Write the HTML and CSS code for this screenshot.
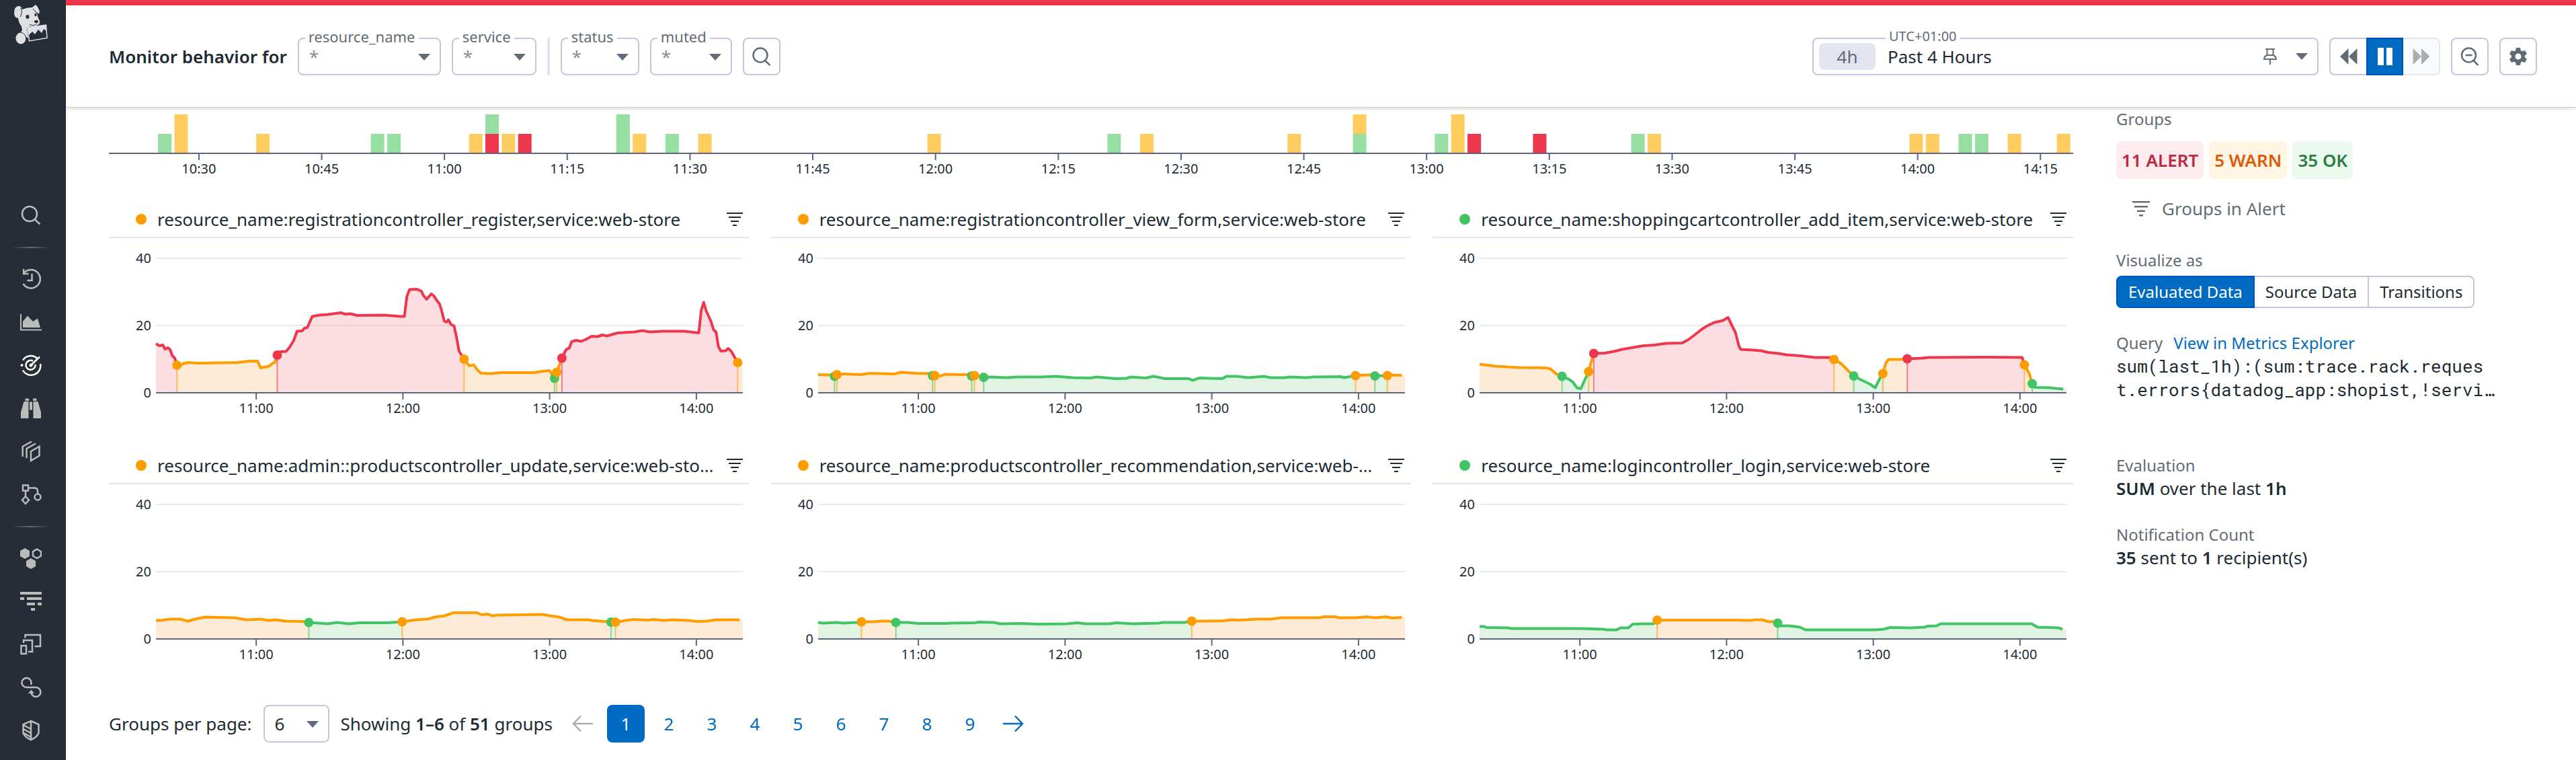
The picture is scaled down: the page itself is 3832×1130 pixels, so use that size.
FILE: index.html
```html
<!DOCTYPE html>
<html lang="en">
<head>
    <meta charset="UTF-8">
    <meta name="viewport" content="width=device-width, initial-scale=1.0">
    <title>Monitor behavior</title>
    <link rel="stylesheet" href="styles.css">
</head>
<body>

<nav class="sidebar">
    <a class="logo" href="#" aria-label="Home">
        <svg width="52" height="60" viewBox="0 0 52 60">
            <path fill="#dfe0e3" d="M2 6 Q6 0 11 3 L13 7 Q20 4 28 4 L33 0 Q38 5 39 11 L37 14 L35 10 Q35 17 39 24 Q40 29 36 30 Q31 35 25 32 L20 34 L22 50 L19 48 Q15 42 11 41 L13 38 L12 32 Q8 28 7 20 Q1 19 1 12 Z"/>
            <ellipse cx="11" cy="50" rx="7.5" ry="8.5" fill="#dfe0e3"/>
            <path fill="none" stroke="#272d37" stroke-width="1" d="M11 5 Q14 12 10 18 M29 6 L35 13 M24 29 Q30 33 35 28 M11 41 Q19 43 19 52"/>
            <ellipse cx="21" cy="18" rx="2.6" ry="3" fill="#272d37"/>
            <ellipse cx="33" cy="15" rx="1.6" ry="2.2" fill="#272d37"/>
            <ellipse cx="34" cy="25" rx="3" ry="2" fill="#272d37"/>
            <path fill="#272d37" stroke="#dfe0e3" stroke-width="1.5" d="M21 34 L48.500 30 L50 49.500 L23.500 54 Z"/>
            <path fill="#dfe0e3" d="M21 34 L48 30 L48.500 39 L45 36 L42 42 L37 37 L32 44 L28 40 L23 45 Z"/>
        </svg>
    </a>
    <a class="nav-item" href="#" aria-label="Search">
        <svg class="icon" viewBox="0 0 32 32"><circle cx="14" cy="14" r="11"/><path d="M21.500 22 L29.500 29.500"/></svg>
    </a>
    <hr class="nav-divider">
    <a class="nav-item" href="#" aria-label="Recent">
        <svg class="icon" viewBox="0 0 32 32"><path d="M4.500 8.500 A13.700 13.700 0 1 1 4.500 23"/><path d="M5.200 1 V8 H12.500 M17.500 8 V18 H10.500"/></svg>
    </a>
    <a class="nav-item" href="#" aria-label="Dashboards">
        <svg class="icon" viewBox="0 0 32 32"><path d="M1 4 V27.500 H32" stroke-width="2"/><path class="solid" d="M4 24 V15 L11 6.500 L19 15 L26 10.500 L30 24 Z"/></svg>
    </a>
    <a class="nav-item active" href="#" aria-label="Monitors">
        <svg class="icon" viewBox="0 0 32 32"><path d="M4 8.500 A14 14 0 0 1 25 5.500 M30 14 A14 14 0 0 1 4 23.500 M22.500 15 A7 7 0 1 1 19 9.700 M16 16 L29 3.500"/><circle class="solid" cx="2.500" cy="16" r="2"/><circle class="solid" cx="16" cy="16" r="2.500"/></svg>
    </a>
    <a class="nav-item" href="#" aria-label="Watchdog">
        <svg class="icon" viewBox="0 0 32 32"><path class="solid" d="M7.500 1.500 H13 V5 H7.500 Z M19 1.500 H24.500 V5 H19 Z M5.500 6 H12.500 V31 H1 V22 Z M19.500 6 H26.500 L31 22 V31 H19.500 Z M14 6.500 H18 V18.500 H14 Z"/></svg>
    </a>
    <a class="nav-item" href="#" aria-label="Infrastructure">
        <svg class="icon" viewBox="0 0 32 32"><path d="M16 16 L28.500 9 V22.500 L16 30 Z M9.500 26 V12 L23 4.500 M3.700 24 V9 L17 1.500"/></svg>
    </a>
    <a class="nav-item" href="#" aria-label="CI">
        <svg class="icon" viewBox="0 0 32 32"><path d="M4 2.500 H12 V10.500 H4 Z M8 10.500 V19 M8 19 L13 24.500 L8 30 L3 24.500 Z M12 6.500 H21 Q26 6.500 26 11 V15.500"/><circle cx="26" cy="20" r="4.500"/></svg>
    </a>
    <hr class="nav-divider">
    <a class="nav-item" href="#" aria-label="Integrations">
        <svg class="icon" viewBox="0 0 32 32"><path class="solid" d="M7 1 L14 5 V13 L7 17 L0 13 V5 Z M16 16 L23 20 V28 L16 32 L9 28 V20 Z"/><path d="M25 2.500 L31 6 V12.500 L25 16 L19 12.500 V6 Z"/></svg>
    </a>
    <a class="nav-item" href="#" aria-label="APM">
        <svg class="icon" viewBox="0 0 32 32"><path class="solid" d="M0 2 H32 V6 H0 Z M0 10 H6 V14 H0 Z M10 10 H32 V14 H10 Z M10 18 H22 V22 H10 Z M26 18 H32 V22 H26 Z M16 26 H22 V30 H16 Z"/></svg>
    </a>
    <a class="nav-item" href="#" aria-label="UX monitoring">
        <svg class="icon" viewBox="0 0 32 32"><path d="M1.500 18 H9 V30 H1.500 Z M5 14 V10 H18 V27 H12 M7.500 6.500 V2 H30 V19 H21.500"/></svg>
    </a>
    <a class="nav-item" href="#" aria-label="Synthetics">
        <svg class="icon" viewBox="0 0 32 32"><path d="M16.500 12 V9 A7 7 0 1 0 9.500 16 H23 A7 7 0 1 1 16.500 24"/><path class="solid" d="M12 25 L16.500 19.500 L21 25 Z"/></svg>
    </a>
    <a class="nav-item" href="#" aria-label="Security">
        <svg class="icon" viewBox="0 0 32 32"><path d="M16 2 L27.500 7 V20 Q25 26 16 30 Q7 26 4.500 20 V7 Z M16 2 V30 M5 8 L16 14 M5 14 L16 20 M6 20 L16 26"/></svg>
    </a>
</nav>

<div class="page">
    <header class="topbar">
        <h1 class="topbar-title">Monitor behavior for</h1>
        <div class="filters">
            <div class="filter filter-resource">
                <label for="resource">resource_name</label>
                <select id="resource"><option>*</option></select>
            </div>
            <div class="filter filter-service">
                <label for="service">service</label>
                <select id="service"><option>*</option></select>
            </div>
            <span class="separator"></span>
            <div class="filter filter-status">
                <label for="status">status</label>
                <select id="status"><option>*</option></select>
            </div>
            <div class="filter filter-muted">
                <label for="muted">muted</label>
                <select id="muted"><option>*</option></select>
            </div>
            <button class="icon-button" type="button" aria-label="Search">
                <svg width="28" height="28" viewBox="0 0 28 28" fill="none" stroke="currentColor" stroke-width="2.500"><circle cx="12" cy="12" r="10.500"/><path d="M19 20 L26.500 27"/></svg>
            </button>
        </div>

        <div class="time-controls">
            <button class="time-range" type="button">
                <span class="timezone">UTC+01:00</span>
                <span class="time-pill">4h</span>
                <span class="time-text">Past 4 Hours</span>
                <svg width="20" height="26" viewBox="0 0 20 26" fill="none" stroke="currentColor" stroke-width="2"><path d="M3 2 H17 M5.500 2 V11 M14.500 2 V11 M5.500 11 Q1 13 1 17 H19 Q19 13 14.500 11 Z M10 17 V25"/></svg>
                <span class="caret"></span>
            </button>
            <div class="playback">
                <button class="icon-button" type="button" aria-label="Back">
                    <svg width="26" height="24" viewBox="0 0 26 24" fill="currentColor"><path d="M12.500 0 V24 L0 12 Z M25.500 0 V24 L13 12 Z"/></svg>
                </button>
                <button class="icon-button selected" type="button" aria-label="Pause">
                    <svg width="24" height="26" viewBox="0 0 24 26" fill="currentColor"><path d="M1 0 H10 V26 H1 Z M14 0 H23 V26 H14 Z"/></svg>
                </button>
                <button class="icon-button" type="button" aria-label="Forward" disabled>
                    <svg width="26" height="24" viewBox="0 0 26 24" fill="currentColor"><path d="M0.500 0 V24 L13 12 Z M13 0 V24 L25.500 12 Z"/></svg>
                </button>
            </div>
            <button class="icon-button" type="button" aria-label="Zoom out">
                <svg width="28" height="28" viewBox="0 0 28 28" fill="none" stroke="currentColor" stroke-width="2.500"><circle cx="12.500" cy="12" r="10.500"/><path d="M19.500 20 L26.500 27 M7.500 12 H17.500"/></svg>
            </button>
            <button class="icon-button" type="button" aria-label="Settings">
                <svg width="28" height="28" viewBox="0 0 28 28" fill="currentColor"><path fill-rule="evenodd" d="M11 1 H17 L17.800 5 L20 6.300 L24 5 L27 10 L24 12.700 V15.300 L27 18 L24 23 L20 21.700 L17.800 23 L17 27 H11 L10.200 23 L8 21.700 L4 23 L1 18 L4 15.300 V12.700 L1 10 L4 5 L8 6.300 L10.200 5 Z M14 9.500 A4.500 4.500 0 1 0 14 18.500 A4.500 4.500 0 1 0 14 9.500 Z"/></svg>
            </button>
        </div>
    </header>

    <div class="content">
        <main class="groups">
            <div class="timeline" id="timeline"></div>
            <div class="chart-grid" id="charts"></div>

            <div class="pagination">
                <label for="perPage">Groups per page:</label>
                <div class="filter filter-page">
                    <select id="perPage"><option>6</option></select>
                </div>
                <span>Showing <b>1–6</b> of <b>51</b> groups</span>
                <div class="pages">
                    <button type="button" aria-label="Previous" disabled>
                        <svg width="32" height="26" viewBox="0 0 32 26" fill="none" stroke="currentColor" stroke-width="2.500"><path d="M31 13 H2 M13 1.500 L2 13 L13 24.500"/></svg>
                    </button>
                    <button type="button" class="current">1</button>
                    <button type="button">2</button>
                    <button type="button">3</button>
                    <button type="button">4</button>
                    <button type="button">5</button>
                    <button type="button">6</button>
                    <button type="button">7</button>
                    <button type="button">8</button>
                    <button type="button">9</button>
                    <button type="button" aria-label="Next">
                        <svg width="32" height="26" viewBox="0 0 32 26" fill="none" stroke="currentColor" stroke-width="2.500"><path d="M1 13 H30 M19 1.500 L30 13 L19 24.500"/></svg>
                    </button>
                </div>
            </div>
        </main>

        <aside class="details">
            <h2>Groups</h2>
            <div class="badges">
                <span class="badge alert">11 ALERT</span>
                <span class="badge warn">5 WARN</span>
                <span class="badge ok">35 OK</span>
            </div>
            <button class="alert-filter" type="button">
                <svg width="26" height="23" viewBox="0 0 26 23" fill="currentColor"><path d="M0 0 H26 V2.500 H0 Z M3 7 H23 V9.500 H3 Z M7 13.500 H19 V16 H7 Z M10 20 H16 V22.500 H10 Z"/></svg>
                Groups in Alert
            </button>

            <h2>Visualize as</h2>
            <div class="tabs">
                <button type="button" class="selected">Evaluated Data</button>
                <button type="button">Source Data</button>
                <button type="button">Transitions</button>
            </div>

            <div class="query-head">
                <h2>Query</h2>
                <a href="#">View in Metrics Explorer</a>
            </div>
            <code class="query">sum(last_1h):(sum:trace.rack.reques<br>t.errors{datadog_app:shopist,!servi…</code>

            <h2>Evaluation</h2>
            <p class="evaluation"><b>SUM</b> over the last <b>1h</b></p>

            <h2>Notification Count</h2>
            <p><b>35</b> sent to <b>1</b> recipient(s)</p>
        </aside>
    </div>
</div>

<script src="script.js"></script>
</body>
</html>
```
FILE: styles.css
```css
* {
    box-sizing: border-box;
}
body {
    margin: 0;
    display: flex;
    min-height: 100vh;
    font-family: "Noto Sans", "Open Sans", sans-serif;
    font-size: 26px;
    line-height: 34px;
    color: #1c2b34;
    background: #fff;
}
button, select {
    font: inherit;
    color: inherit;
}
button {
    padding: 0;
    background: #fff;
    cursor: pointer;
}
h1, h2, p {
    margin: 0;
}
a {
    color: #006bc2;
    text-decoration: none;
}
b {
    font-weight: 600;
}

/* Sidebar */
.sidebar {
    flex: none;
    width: 98px;
    padding-right: 6px;
    display: flex;
    flex-direction: column;
    align-items: center;
    background: #272d37;
}
.logo {
    height: 288px;
    padding-top: 7px;
}
.nav-item {
    height: 64px;
    display: flex;
    align-items: center;
    color: #babcba;
}
.nav-item.active {
    color: #fff;
}
.nav-divider {
    width: 56px;
    height: 2px;
    margin: 15px 0 14px;
    border: 0;
    background: linear-gradient(to right, transparent, #6a6a6c, transparent);
}
.icon {
    width: 32px;
    height: 32px;
    fill: none;
    stroke: currentColor;
    stroke-width: 2.5px;
}
.icon .solid {
    fill: currentColor;
    stroke: none;
}

/* Top bar */
.page {
    flex: 1;
    min-width: 0;
    border-top: 8px solid #ee364c;
}
.topbar {
    height: 152px;
    padding: 0 58px 0 64px;
    display: flex;
    align-items: center;
    border-bottom: 1px solid #ccc;
    box-shadow: 0 2px 6px rgba(0, 0, 0, 0.14);
}
.topbar-title {
    font-size: 26px;
    font-weight: 600;
    margin-right: 16px;
}
.filters, .time-controls {
    display: flex;
    gap: 16px;
}
.time-controls {
    margin-left: auto;
}
.filter {
    position: relative;
    height: 56px;
}
.filter label {
    position: absolute;
    top: -16px;
    left: 11px;
    padding: 0 5px;
    font-size: 22px;
    line-height: 28px;
    color: #626c76;
    background: #fff;
}
.filter select {
    width: 100%;
    height: 100%;
    padding: 0 15px;
    border: 2px solid #c2c5de;
    border-radius: 8px;
    appearance: none;
    background: #fff;
    color: #868d94;
}
.filter::after, .caret {
    content: "";
    border: 9px solid transparent;
    border-top: 10px solid #626c76;
    border-bottom: 0;
}
.filter::after {
    position: absolute;
    right: 16px;
    top: 24px;
    pointer-events: none;
}
.filter-resource {
    width: 213px;
}
.filter-service {
    width: 126px;
}
.filter-status {
    width: 117px;
}
.filter-muted {
    width: 122px;
}
.separator {
    width: 4px;
    background: #e2e4ef;
}
.icon-button {
    width: 56px;
    height: 56px;
    display: flex;
    align-items: center;
    justify-content: center;
    border: 2px solid #c2c5de;
    border-radius: 8px;
    color: #626c76;
}
.icon-button:disabled {
    color: #a8adb3;
    background: #f9fafc;
    border-color: #e2e4ef;
}
.icon-button.selected, .tabs .selected {
    color: #fff;
    background: #006bc2;
    border-color: #0052ba;
}
.time-range {
    position: relative;
    width: 753px;
    height: 56px;
    padding: 0 14px 0 8px;
    display: flex;
    align-items: center;
    border: 2px solid #c2c5de;
    border-radius: 8px;
    color: #626c76;
}
.timezone {
    position: absolute;
    top: -16px;
    left: 107px;
    padding: 0 5px;
    font-size: 20px;
    line-height: 24px;
    background: #fff;
}
.time-pill {
    width: 84px;
    height: 40px;
    line-height: 40px;
    border-radius: 8px;
    background: #e2e4ef;
}
.time-text {
    flex: 1;
    padding-left: 18px;
    text-align: left;
    color: #1c2b34;
}
.time-range .caret {
    margin-left: 28px;
}
.playback {
    display: flex;
}
.playback .icon-button {
    width: 55px;
}
.playback .icon-button:first-child {
    border-right: 0;
    border-radius: 8px 0 0 8px;
}
.playback .selected {
    border-radius: 0;
}
.playback .icon-button:last-child {
    border-left: 0;
    border-radius: 0 8px 8px 0;
}

/* Content */
.content {
    display: flex;
    gap: 64px;
    padding: 0 58px 0 64px;
}
.groups {
    flex: 1;
    min-width: 0;
}
.timeline {
    height: 140px;
}
.timeline svg, .plot svg {
    display: block;
    overflow: visible;
}
.chart-grid {
    display: grid;
    grid-template-columns: repeat(3, minmax(0, 1fr));
    gap: 0 32px;
}
.chart {
    height: 366px;
}
.chart-head {
    height: 54px;
    padding: 0 10px 0 40px;
    display: flex;
    align-items: center;
    border-bottom: 2px solid #e2e4ef;
}
.chart-title {
    flex: 1;
    margin: 0 17px 0 16px;
    overflow: hidden;
    white-space: nowrap;
    text-overflow: ellipsis;
}
.dot {
    width: 16px;
    height: 16px;
    border-radius: 50%;
}
.dot.warn {
    background: #ff9d00;
}
.dot.ok {
    background: #41c464;
}
.plot {
    padding: 0 10px 0 70px;
}

/* Chart drawing */
.axis {
    stroke: #5d6380;
    stroke-width: 2;
}
.grid-line {
    stroke: #ebebeb;
    stroke-width: 2;
}
.tick-label {
    font-size: 20px;
    fill: #1c2b34;
}
.line {
    fill: none;
    stroke-width: 4;
    stroke-linejoin: round;
}
.mark {
    stroke-width: 2;
    stroke-opacity: 0.6;
}
.line.alert, .mark.alert {
    stroke: #ee364c;
}
.line.warn, .mark.warn {
    stroke: #ff9d00;
}
.line.ok, .mark.ok {
    stroke: #41c464;
}
.area.alert {
    fill: rgba(238, 54, 76, 0.17);
}
.area.warn {
    fill: #feebd7;
}
.area.ok {
    fill: #e1f3e3;
}
.point.alert, .bar.alert {
    fill: #ee364c;
}
.point.warn {
    fill: #ff9d00;
}
.point.ok {
    fill: #41c464;
}
.bar.warn {
    fill: #ffcd5f;
}
.bar.ok {
    fill: #96dea2;
}

/* Pagination */
.pagination {
    display: flex;
    align-items: center;
    gap: 17px;
    margin-top: 16px;
}
.filter-page {
    width: 98px;
}
.filter-page select {
    color: #1c2b34;
}
.pages {
    display: flex;
    gap: 8px;
}
.pages button {
    width: 56px;
    height: 56px;
    display: flex;
    align-items: center;
    justify-content: center;
    border: 0;
    border-radius: 8px;
    color: #006bc2;
}
.pages button:disabled {
    color: #a8adb3;
}
.pages .current {
    color: #fff;
    background: #006bc2;
}

/* Details panel */
.details {
    width: 626px;
}
.details h2 {
    font-size: 24px;
    font-weight: 400;
    line-height: 34px;
    color: #626c76;
}
.badges {
    display: flex;
    gap: 8px;
    margin: 16px 0;
}
.badge {
    padding: 0 8px;
    font-weight: 600;
    line-height: 56px;
    border-radius: 8px;
}
.badge.alert {
    color: #bc2a3f;
    background: #fdebed;
}
.badge.warn {
    color: #db5b0b;
    background: #fff5e2;
}
.badge.ok {
    color: #2a7e41;
    background: #ecf9ef;
}
.alert-filter {
    height: 56px;
    padding: 0 24px;
    margin-bottom: 32px;
    display: flex;
    align-items: center;
    gap: 18px;
    border: 0;
    color: #626c76;
}
.tabs {
    display: flex;
    margin: 6px 0 35px;
}
.tabs button {
    height: 48px;
    padding: 0 16px;
    font-size: 24px;
    border: 2px solid #c2c5de;
    border-left: 0;
}
.tabs button:first-child {
    border-left: 2px solid #0052ba;
    border-radius: 8px 0 0 8px;
}
.tabs button:last-child {
    border-radius: 0 8px 8px 0;
}
.query-head {
    display: flex;
    gap: 16px;
    font-size: 24px;
}
.query {
    display: block;
    margin-bottom: 78px;
    font-family: "Roboto Mono", "Liberation Mono", monospace;
    font-size: 26px;
    line-height: 35px;
}
.evaluation {
    margin-bottom: 35px;
}
```
FILE: script.js
```javascript
const MINUTES = 240;
const START = 10 * 60 + 19;

// [slot, state of each event from the bottom up], two minutes per slot
const events = [
    [3, "ok"], [4, "warn", "warn"], [9, "warn"], [16, "ok"], [17, "ok"],
    [22, "warn"], [23, "alert", "ok"], [24, "warn"], [25, "alert"],
    [31, "ok", "ok"], [32, "warn"], [34, "ok"], [36, "warn"],
    [50, "warn"], [61, "ok"], [63, "warn"], [72, "warn"], [76, "ok", "warn"],
    [81, "ok"], [82, "warn", "warn"], [83, "alert"], [87, "alert"],
    [93, "ok"], [94, "warn"], [110, "warn"], [111, "warn"],
    [113, "ok"], [114, "ok"], [116, "warn"], [119, "warn"]
];

// Each run is a state and its points: minute,value
const charts = [
    {
        name: "resource_name:registrationcontroller_register,service:web-store",
        state: "warn",
        runs: [
            ["alert", "0,14.6 1.4,14 2.8,14.2 3.7,13 4.9,13.4 5.8,12.8 6.7,11 7.7,10.3"],
            ["warn", "8.6,8.2 10,8.1 11.2,8.7 13.3,9 17.7,8.8 24.7,8.9 33.5,9 37.9,9.4 41.6,9.4 42.8,7.4 46.3,7.9 47.5,8.7 48.6,9"],
            ["alert", "49.6,11.2 50.7,12.2 53.2,12.3 54.6,13.5 56.3,15.5 57.7,18.3 59.8,18.4 60.7,19.2 61.9,19.4 63,21.2 63.9,22.7 66.8,23.1 70.4,23.3 75.6,23.8 77.4,23.4 79.6,23.5 82.3,23 93.2,23.1 100.2,22.7 101.6,22.7 102.6,28.6 103.7,30.7 106.7,30.8 108.6,30.2 109.3,29 110.7,27.8 112.6,29.4 113.7,28.8 114.7,27.6 116,26.4 116.8,24.5 117.9,21.3 118.8,21 119.6,21.7 120.7,20.3 121.9,19.9 123,16.2 124,12.3"],
            ["warn", "126,10 127,9 128.2,8 130,8.3 131.2,7 133,5.8 137,5.7 141.4,6 154.6,6 158,6.4 161,6.6"],
            ["ok", "163,4.3"],
            ["warn", "163.9,6.1"],
            ["alert", "166,10.3 167.7,12.8 169,13.3 170,15.2 171.8,15.6 173.9,15.3 175.6,15.8 178.2,16.8 180.5,16.7 182.6,17.2 184.4,16.9 188.8,17.8 195.8,18.1 198.8,18.5 202,18.1 207.2,18.3 216,18.3 222,17.8 223,24.5 224,26.9 225,24.4 227,21.2 228,18.8 229.1,18 230,13.8 231,12.4 233,12.5 234,13.2 235.3,12.3"],
            ["warn", "237.9,9"]
        ]
    },
    {
        name: "resource_name:registrationcontroller_view_form,service:web-store",
        state: "warn",
        runs: [
            ["warn", "0,5.4 5,5.3"],
            ["ok", "6.7,4.9"],
            ["warn", "7.7,5.4 11,5.6 17.5,5.4 21,5.8 31,5.6 34,6.1 40,5.8 46,5.7"],
            ["ok", "46.8,5.1"],
            ["warn", "47.7,5.1 50,5 52,5.5 56.8,5.4 62,5.4"],
            ["ok", "62.8,5"],
            ["warn", "63.9,5.1 67,5"],
            ["ok", "67.7,4.6 70.9,4.7 77,4.5 81.4,4.7 91,4.7 97.2,4.9 104.2,4.5 111.2,4.4 113.9,4.7 121.8,4.2 126.1,4.3 127.9,4.7 134,4.4 137.2,4.9 141.9,4.2 151.6,4.2 153.2,3.7 156,4.4 165.3,4.2 167,4.9 171.2,4.9 176.1,4.5 182.3,4.9 184.9,4.5 191,4.5 192.8,4.7 199.8,4.5 202.5,4.7 213.9,4.8 215.1,4.5"],
            ["warn", "219.8,5.1 223.5,5.3 226.5,5.3"],
            ["ok", "227.7,5 231.4,5.1"],
            ["warn", "232.8,5.1 234,5.3 238.7,5.2"]
        ]
    },
    {
        name: "resource_name:shoppingcartcontroller_add_item,service:web-store",
        state: "ok",
        runs: [
            ["warn", "0,8.5 6.5,7.9 16.1,7.5 27.2,7.4 29,7.1 31.4,5.6"],
            ["ok", "33.7,4.9 36.3,4.1 38,3.3 39.8,1.5 41.4,1.2 43,3.8"],
            ["warn", "44.6,6.3 45.6,9.1"],
            ["alert", "46.7,11.7 51.2,11.8 55.6,12.4 58.2,12.9 67,14 71.4,14.2 76.3,14.7 82.8,14.8 85.4,15.8 88.1,17.3 90.7,18.8 92.8,19.8 96,20.9 99.5,21.5 101.6,22.4 104.7,17.8 106.1,13.8 106.8,12.9 111.8,12.7 115.3,12.5 117.9,12 122.3,11.7 125.4,11.3 131.1,11 137.2,10.5 143.3,10.5"],
            ["warn", "144.9,9.9 147.7,8.8 150.4,6.8"],
            ["ok", "153,5 155.6,4 159.6,2.6 161.8,1.5 163.5,4"],
            ["warn", "164.9,5.7 166.1,8.8 167.2,9.9 171.4,9.9"],
            ["alert", "174.9,10.1 181,10.3 183.7,10.5 208.2,10.6 221.9,10.5"],
            ["warn", "222.8,8.3 224.9,5.5"],
            ["ok", "226,2.7 227,1.6 232.8,1.5 238.7,1.1"]
        ]
    },
    {
        name: "resource_name:admin::productscontroller_update,service:web-store",
        state: "warn",
        runs: [
            ["warn", "0,5.5 2.8,5.6 5.8,5.9 9.9,5.9 13,5.3 15.5,5.8 20,6.5 32,6.3 37,5.7 43,5.9 46,5.5 49,5.7 53,5.3 60,5.2"],
            ["ok", "62.5,4.9 70.2,4.5 74,4.9 79,4.5 83,4.8 94.3,4.8"],
            ["warn", "100.7,5.1 106.3,5.7 111,5.9 114.7,6.6 117.7,6.8 121.8,7.8 131.2,7.8 133.2,7.2 135.5,7.4 137.6,6.9 140,7.1 158,7.3 161,6.9 165,6.5 168,5.7 177,5.7 178.2,5.5 183.3,5.2"],
            ["ok", "186.1,5"],
            ["warn", "187.9,5 192.2,5.5 195.3,5.8 201,5.6 203.7,5.8 207.5,5.5 211.3,5.7 217.7,5.5 221.5,5.2 225.3,5.3 229,5.7 238.7,5.7"]
        ]
    },
    {
        name: "resource_name:productscontroller_recommendation,service:web-store",
        state: "warn",
        runs: [
            ["ok", "0,4.9 2.1,4.7 7.7,4.9 10.4,4.7 15.6,4.9"],
            ["warn", "17.7,5.1 22.6,5.1 26.1,5.3 29.1,5.3"],
            ["ok", "31.8,4.9 36.7,4.9 41,4.6 52.5,4.6 54.2,4.7 63.9,4.8 65.6,5 71.8,4.9 74.4,4.5 83.2,4.6 90.2,4.4 101.6,4.5 106,4.8 109.5,4.5 119.1,4.5 121.8,4.8 128.8,4.5 139.3,4.7 141,4.9 149.8,4.9"],
            ["warn", "152.8,5.3 157.7,5.3 165.6,5.4 169.1,5.7 172.6,5.6 179.6,5.9 184.9,5.9 189.3,6.3 205.1,6.3 206.8,6.6 211.6,6.6 213,6.3 220,6.3 224.4,6.6 227.9,6.3 232.3,6.6 234.9,6.2 238.7,6.4"]
        ]
    },
    {
        name: "resource_name:logincontroller_login,service:web-store",
        state: "ok",
        runs: [
            ["ok", "0,3.7 2.1,3.7 2.6,3.4 11.8,3.3 13,3.1 40.7,3.1 50.4,2.9 52.1,2.7 56,2.7 57.7,3.3 60.9,3.3 62.6,4.4 66.7,4.5 71,4.5"],
            ["warn", "72.6,5.6 104.7,5.6 110.9,5.5 112.6,5.7 115.6,5.7 117.9,5.2 120.9,5.1"],
            ["ok", "121.9,4.7 122.8,3.9 126.7,3.9 131,3.5 133.3,2.7 161.8,2.7 165.3,2.9 167.9,3.4 176.7,3.3 181.9,3.5 183.3,3.8 186.8,3.9 188.6,4.5 225.8,4.5 228.1,3.5 236.7,3.3 238.4,2.9"]
        ]
    }
];

function clock(minute) {
    return Math.floor(minute / 60) + ":" + String(minute % 60).padStart(2, "0");
}

// Axis line with a tick and a label every `step` minutes
function drawAxis(width, y, step) {
    let out = `<line class="axis" x1="0" x2="${width}" y1="${y}" y2="${y}"/>`;
    for (let t = Math.ceil(START / step) * step; t < START + MINUTES; t += step) {
        const x = (t - START) / MINUTES * width;
        out += `<line class="axis" x1="${x}" x2="${x}" y1="${y}" y2="${y + 10}"/>`;
        out += `<text class="tick-label" x="${x}" y="${y + 30}" text-anchor="middle">${clock(t)}</text>`;
    }
    return out;
}

function drawTimeline() {
    const box = document.getElementById("timeline");
    const width = box.clientWidth;
    const slot = width / 120;
    let out = "";
    events.forEach(([index, ...states]) => {
        states.forEach((state, level) => {
            out += `<rect class="bar ${state}" x="${index * slot}" y="${39 - level * 29}" width="20" height="29"/>`;
        });
    });
    box.innerHTML = `<svg width="${width}" height="110">${out}${drawAxis(width, 68, 15)}</svg>`;
}

function drawPlot(box, chart) {
    const width = box.clientWidth - 80;
    const base = 230;
    const px = ([m, v]) => [m / MINUTES * width, base - v * 5];
    let out = "", marks = "";

    [20, 40].forEach(v => {
        out += `<line class="grid-line" x1="0" x2="${width}" y1="${base - v * 5}" y2="${base - v * 5}"/>`;
    });
    [0, 20, 40].forEach(v => {
        out += `<text class="tick-label" x="-7" y="${base - v * 5 + 7}" text-anchor="end">${v}</text>`;
    });

    const runs = chart.runs.map(([state, text]) => [state, text.split(" ").map(p => px(p.split(",").map(Number)))]);
    runs.forEach(([state, points], i) => {
        const next = runs[i + 1];
        const line = next ? points.concat([next[1][0]]) : points;
        const last = line[line.length - 1];
        const end = next ? last[0] : width;
        out += `<path class="area ${state}" d="M${points[0][0]} ${base} L${line.join(" L")} L${end} ${last[1]} V${base} Z"/>`;
        out += `<polyline class="line ${state}" points="${line.join(" ")}"/>`;
        if (i > 0) {
            const [x, y] = points[0];
            marks += `<line class="mark ${state}" x1="${x}" x2="${x}" y1="${y}" y2="${base}"/>`;
            marks += `<circle class="point ${state}" cx="${x}" cy="${y}" r="7"/>`;
        }
    });
    box.innerHTML = `<svg width="${width}" height="270">${out}${marks}${drawAxis(width, base, 60)}</svg>`;
}

function drawAll() {
    drawTimeline();
    document.querySelectorAll(".plot").forEach((box, i) => drawPlot(box, charts[i]));
}

document.getElementById("charts").innerHTML = charts.map(chart => `
    <section class="chart">
        <div class="chart-head">
            <span class="dot ${chart.state}"></span>
            <span class="chart-title">${chart.name}</span>
            <svg width="24" height="20" viewBox="0 0 24 20" fill="currentColor"><path d="M0 0 H24 V2 H0 Z M3 6 H21 V8 H3 Z M6 12 H18 V14 H6 Z M9 18 H15 V20 H9 Z"/></svg>
        </div>
        <div class="plot"></div>
    </section>`).join("");

drawAll();
window.addEventListener("resize", drawAll);
```
